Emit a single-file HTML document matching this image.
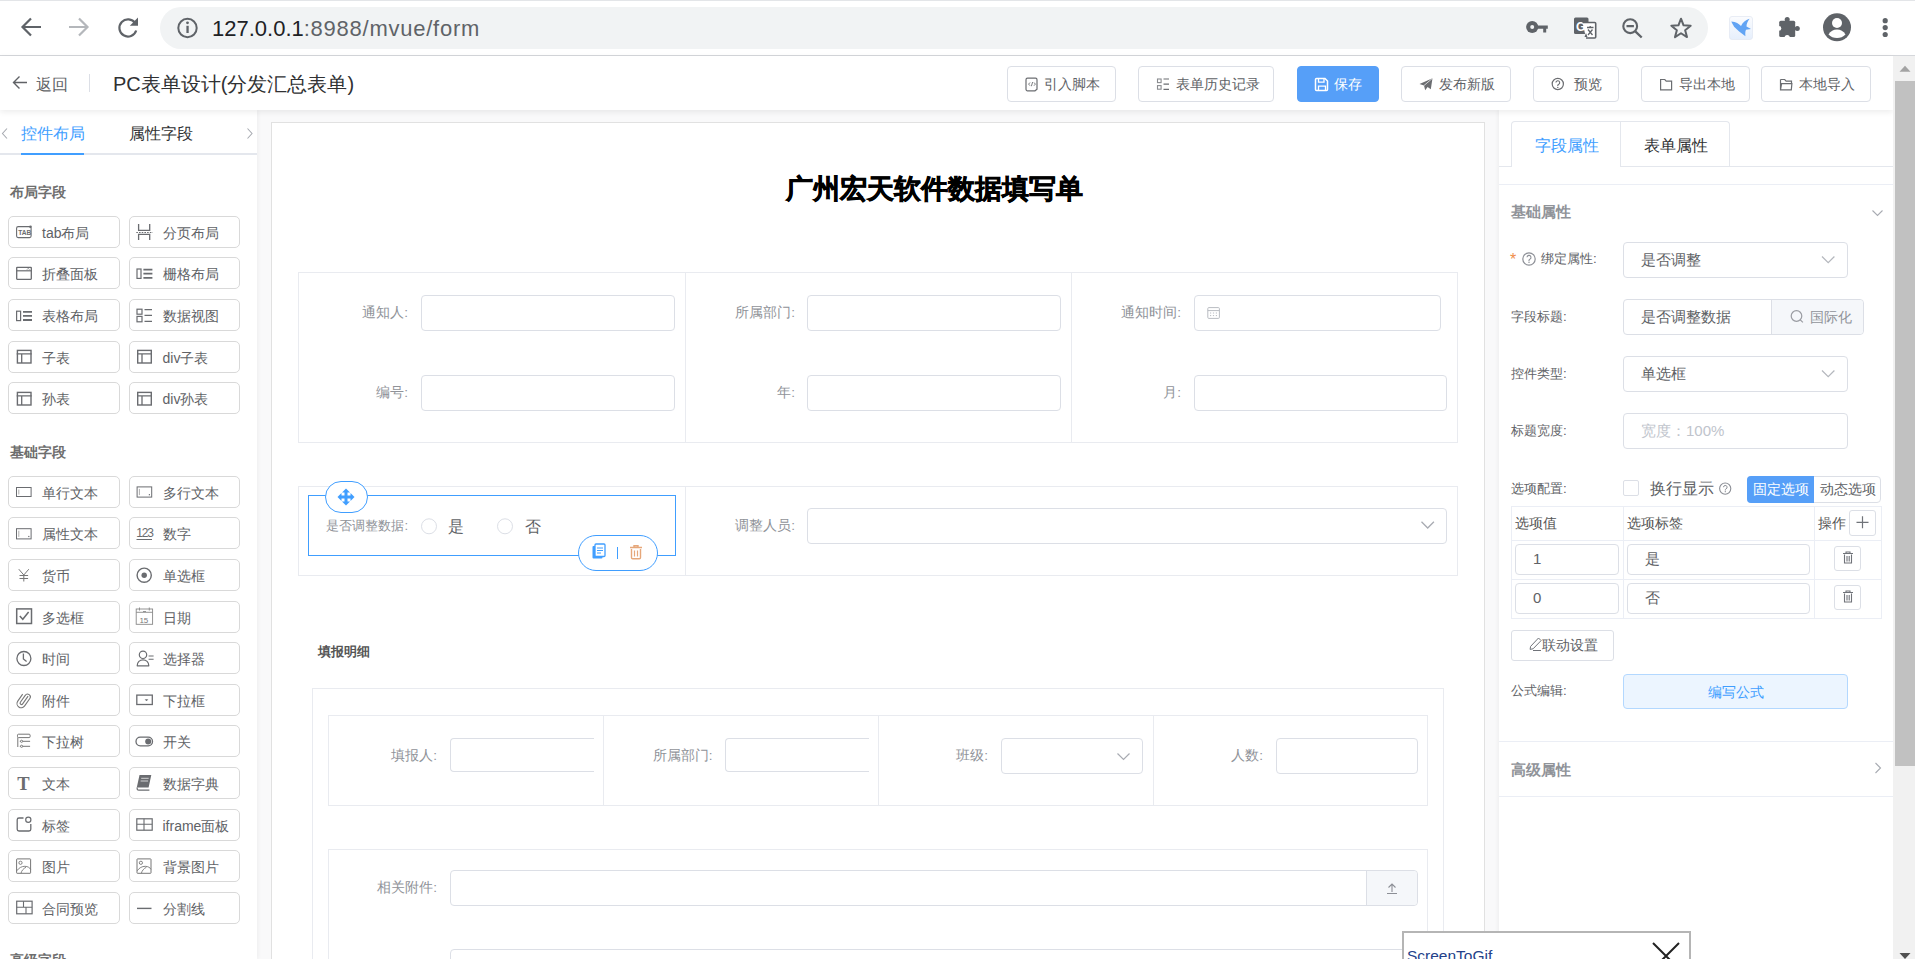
<!DOCTYPE html><html><head><meta charset="utf-8"><style>
*{box-sizing:border-box;margin:0;padding:0}
html,body{width:1915px;height:959px;overflow:hidden;background:#fff;font-family:"Liberation Sans",sans-serif;color:#606266}
.a{position:absolute}
.t{position:absolute;white-space:nowrap;line-height:1;z-index:8}
svg{position:absolute;overflow:visible}
</style></head><body>
<div class="a" style="left:0px;top:0px;width:1915px;height:56px;background:#fff;border-top:1px solid #e3e5e8;border-bottom:1px solid #d5d7db"></div>
<div class="a" style="left:160px;top:7px;width:1548px;height:42px;background:#f1f3f4;border-radius:21px"></div>
<svg style="left:0px;top:0px;z-index:10" width="1915" height="959" viewBox="0 0 1915 959">
<g fill="none" stroke="#5f6368" stroke-width="2.2" stroke-linecap="butt">
<path d="M41 27H23M31 18.5l-8.5 8.5 8.5 8.5"/>
</g>
<g fill="none" stroke="#b4b7bb" stroke-width="2.2">
<path d="M69 27h18M79 18.5l8.5 8.5-8.5 8.5"/>
</g>
<g fill="none" stroke="#5f6368" stroke-width="2.2">
<path d="M135.2 23.2A8.6 8.6 0 1 0 136.2 30.5"/>
</g>
<path d="M138 17.5v8.2h-8.2z" fill="#5f6368"/>
<circle cx="187.5" cy="28" r="9.2" fill="none" stroke="#5f6368" stroke-width="2"/>
<rect x="186.4" y="25.8" width="2.3" height="7.2" fill="#5f6368"/>
<circle cx="187.5" cy="22.8" r="1.4" fill="#5f6368"/>
</svg>
<div class="t" style="left:212px;top:18px;font-size:22px;color:#202124;letter-spacing:0px">127.0.0.1<span style="color:#5f6368;letter-spacing:0.75px">:8988/mvue/form</span></div>
<svg style="left:0px;top:0px;z-index:10" width="1915" height="959" viewBox="0 0 1915 959">
<circle cx="1532.2" cy="27" r="6.1" fill="#5f6368"/><circle cx="1532.2" cy="27" r="2" fill="#f1f3f4"/>
<path d="M1537 25.4h10.8v3.4h-1.6v3.7h-3v-3.7h-6.2z" fill="#5f6368"/>
<rect x="1574" y="17.5" width="14.5" height="16.5" rx="1.5" fill="#5f6368"/>
<text x="1576" y="31" font-size="12" font-weight="bold" fill="#fff" font-family="Liberation Sans">G</text>
<path d="M1582.5 22.5h12.2a1 1 0 0 1 1 1V37a1 1 0 0 1-1 1h-8.7" fill="#fff" stroke="#5f6368" stroke-width="1.6"/>
<path d="M1587 27.5h6.5M1590.2 26v1.5M1588 29.5l4.5 5.5M1592.5 29.5l-4.5 5.5" stroke="#5f6368" stroke-width="1.3" fill="none"/>
<path d="M1586 33l1.5 4h-3z" fill="#5f6368"/>
<circle cx="1630.2" cy="26.2" r="6.9" fill="none" stroke="#5f6368" stroke-width="2.1"/>
<path d="M1626.5 26.2h7.4M1635.3 31.3l6.4 6.2" stroke="#5f6368" stroke-width="2.3" fill="none"/>
<path d="M1681 18.7l2.55 6.6 7.1.4-5.5 4.5 1.85 6.9-6-3.85-6 3.85 1.85-6.9-5.5-4.5 7.1-.4z" fill="none" stroke="#5f6368" stroke-width="2" stroke-linejoin="round"/>
<defs><linearGradient id="bg1" x1="0" y1="0" x2="0" y2="1"><stop offset="0" stop-color="#fbfcfe"/><stop offset="1" stop-color="#e6effc"/></linearGradient></defs>
<rect x="1729.5" y="16.5" width="23" height="23" rx="2.5" fill="url(#bg1)" stroke="#e3e8f2" stroke-width="0.8"/>
<path d="M1731.3 21.6C1736 22 1739 24 1741 26C1743 22 1746 20 1749.6 18.8C1747.5 21.5 1746.5 24 1746.5 26.5L1751 29L1746 29.8C1745 32 1745.3 34 1745.4 36.2C1741 33 1737 30 1734.1 26.8C1733 25 1732 23 1731.3 21.6Z" fill="#62a4f4"/>
<rect x="1779.2" y="20.7" width="16" height="16.4" rx="1.6" fill="#5f6368"/>
<circle cx="1787.2" cy="19.6" r="2.5" fill="#5f6368"/>
<circle cx="1797.3" cy="28.4" r="2.5" fill="#5f6368"/>
<circle cx="1778.9" cy="28.4" r="2.4" fill="#fff"/>
<circle cx="1787.2" cy="37.6" r="2.6" fill="#fff"/>
<circle cx="1837" cy="27.3" r="14" fill="#5f6368"/>
<circle cx="1837" cy="23" r="5" fill="#fff"/>
<path d="M1828.5 34.5c2-3.5 5-5 8.5-5s6.5 1.5 8.5 5c-2.3 2.3-5.2 3.6-8.5 3.6s-6.2-1.3-8.5-3.6z" fill="#fff"/>
<circle cx="1885.2" cy="20.7" r="2.6" fill="#5f6368"/>
<circle cx="1885.2" cy="27.6" r="2.6" fill="#5f6368"/>
<circle cx="1885.2" cy="34.5" r="2.6" fill="#5f6368"/>
</svg>
<div class="a" style="left:0px;top:110px;width:1893px;height:849px;background:#f9f9fa"></div>
<div class="a" style="left:0px;top:56px;width:1893px;height:54px;background:#fff;box-shadow:0 2px 6px rgba(0,0,0,.08);z-index:2"></div>
<svg style="left:0px;top:0px;z-index:10" width="1915" height="959" viewBox="0 0 1915 959"><path d="M27 82.5H13.5M19.5 76.5l-6 6 6 6" fill="none" stroke="#606266" stroke-width="1.4"/>
<rect x="89" y="74" width="1" height="18" fill="#dcdfe6"/></svg>
<div class="t" style="left:36px;top:77px;font-size:16px;color:#606266;font-weight:normal;">返回</div>
<div class="t" style="left:113px;top:74px;font-size:20px;color:#303133;font-weight:normal;">PC表单设计(分发汇总表单)</div>
<div class="a" style="left:1007px;top:66px;width:109px;height:36px;background:#fff;border:1px solid #dcdfe6;border-radius:4px;z-index:3"></div>
<div class="t" style="left:1044px;top:77px;font-size:14px;color:#606266;font-weight:normal;z-index:4">引入脚本</div>
<div class="a" style="left:1138px;top:66px;width:136px;height:36px;background:#fff;border:1px solid #dcdfe6;border-radius:4px;z-index:3"></div>
<div class="t" style="left:1175.5px;top:77px;font-size:14px;color:#606266;font-weight:normal;z-index:4">表单历史记录</div>
<div class="a" style="left:1297px;top:66px;width:82px;height:36px;background:#569ff8;border:1px solid #569ff8;border-radius:4px;z-index:3"></div>
<div class="t" style="left:1333.5px;top:77px;font-size:14px;color:#fff;font-weight:normal;z-index:4">保存</div>
<div class="a" style="left:1401px;top:66px;width:110px;height:36px;background:#fff;border:1px solid #dcdfe6;border-radius:4px;z-index:3"></div>
<div class="t" style="left:1439px;top:77px;font-size:14px;color:#606266;font-weight:normal;z-index:4">发布新版</div>
<div class="a" style="left:1533px;top:66px;width:86px;height:36px;background:#fff;border:1px solid #dcdfe6;border-radius:4px;z-index:3"></div>
<div class="t" style="left:1574px;top:77px;font-size:14px;color:#606266;font-weight:normal;z-index:4">预览</div>
<div class="a" style="left:1641px;top:66px;width:109px;height:36px;background:#fff;border:1px solid #dcdfe6;border-radius:4px;z-index:3"></div>
<div class="t" style="left:1678.5px;top:77px;font-size:14px;color:#606266;font-weight:normal;z-index:4">导出本地</div>
<div class="a" style="left:1761px;top:66px;width:110px;height:36px;background:#fff;border:1px solid #dcdfe6;border-radius:4px;z-index:3"></div>
<div class="t" style="left:1798.5px;top:77px;font-size:14px;color:#606266;font-weight:normal;z-index:4">本地导入</div>
<svg style="left:0px;top:0px;z-index:10" width="1915" height="959" viewBox="0 0 1915 959"><g style="z-index:4">
<path d="M1027.5 78.2h8a1.5 1.5 0 0 1 1.5 1.5v9.5l-2 1.6h-7.5a1.5 1.5 0 0 1-1.5-1.5V79.7a1.5 1.5 0 0 1 1.5-1.5z" fill="none" stroke="#6b6d71" stroke-width="1.2"/>
<path d="M1030 82.5l-1.4 1.6 1.4 1.6M1034 82.5l1.4 1.6-1.4 1.6M1032.6 82l-1.2 4.2" fill="none" stroke="#6b6d71" stroke-width="0.9"/>
<rect x="1157.5" y="79" width="3.6" height="3.6" fill="none" stroke="#8a8c90" stroke-width="1.1"/>
<rect x="1157.5" y="85.6" width="3.6" height="3.6" fill="none" stroke="#8a8c90" stroke-width="1.1"/>
<path d="M1163.5 79h5.5M1163.5 84.2h5.5M1163.5 89.3h5.5" stroke="#6b6d71" stroke-width="1.2"/>
<path d="M1316.5 78.5h8.5l2.5 2.5v8.5a1 1 0 0 1-1 1h-10a1 1 0 0 1-1-1v-10a1 1 0 0 1 1-1z" fill="none" stroke="#fff" stroke-width="1.5"/>
<path d="M1318.5 78.7v3.5h5.5v-3.5M1318.5 90.4v-4.2h7v4.2" fill="none" stroke="#fff" stroke-width="1.3"/>
<path d="M1432.5 78.3l-13 5.6 4.5 1.6 1.2 4.7 2.4-3.2 3.2 2.2z" fill="#6b6d71"/>
<path d="M1424 85.5l8.5-7.2" stroke="#fff" stroke-width="0.7"/>
<circle cx="1557.8" cy="84" r="5.6" fill="none" stroke="#6b6d71" stroke-width="1.2"/>
<path d="M1555.9 82.6a1.9 1.9 0 1 1 2.6 1.8c-.5.2-.7.6-.7 1.1v.6" fill="none" stroke="#6b6d71" stroke-width="1.1"/>
<circle cx="1557.8" cy="87.4" r="0.7" fill="#6b6d71"/>
<path d="M1660.6 79.5h4.2l1.4 1.6h5.4v8.7h-11z" fill="none" stroke="#6b6d71" stroke-width="1.2"/>
<path d="M1780.5 79.5h4.2l1.4 1.6h5.4v2.5M1780.5 79.5v10.3h10.8l0.6-6.2h-10.3l-1.1 6.2" fill="none" stroke="#6b6d71" stroke-width="1.2"/>
</g></svg>
<div class="a" style="left:0px;top:110px;width:257px;height:849px;background:#fff;box-shadow:1px 0 4px rgba(0,0,0,.05);z-index:1"></div>
<svg style="left:0px;top:0px;z-index:3" width="1915" height="959" viewBox="0 0 1915 959"><path d="M7 128.5l-4.5 5 4.5 5" fill="none" stroke="#a8abb2" stroke-width="1.1"/>
<path d="M247.5 128.5l4.5 5-4.5 5" fill="none" stroke="#a8abb2" stroke-width="1.1"/></svg>
<div class="a" style="left:0px;top:153px;width:257px;height:2px;background:#e4e7ed;z-index:2"></div>
<div class="a" style="left:21px;top:153px;width:63px;height:2px;background:#409eff;z-index:3"></div>
<div class="t" style="left:21px;top:126px;font-size:16px;color:#409eff;font-weight:normal;">控件布局</div>
<div class="t" style="left:128.5px;top:126px;font-size:16px;color:#303133;font-weight:normal;">属性字段</div>
<div class="t" style="left:9.5px;top:185.5px;font-size:13.5px;color:#6e6e6e;font-weight:bold;">布局字段</div>
<div class="t" style="left:9.5px;top:445.5px;font-size:13.5px;color:#6e6e6e;font-weight:bold;">基础字段</div>
<div class="t" style="left:9.5px;top:954px;font-size:13.5px;color:#6e6e6e;font-weight:bold;">高级字段</div>
<div class="a" style="left:8px;top:216px;width:112px;height:32px;background:#fff;border:1px solid #d9d9d9;border-radius:5px;z-index:2"></div>
<div class="t" style="left:42px;top:226px;font-size:14px;color:#606266;font-weight:normal;">tab布局</div>
<div class="a" style="left:129px;top:216px;width:111px;height:32px;background:#fff;border:1px solid #d9d9d9;border-radius:5px;z-index:2"></div>
<div class="t" style="left:162.5px;top:226px;font-size:14px;color:#606266;font-weight:normal;">分页布局</div>
<div class="a" style="left:8px;top:257px;width:112px;height:32px;background:#fff;border:1px solid #d9d9d9;border-radius:5px;z-index:2"></div>
<div class="t" style="left:42px;top:267px;font-size:14px;color:#606266;font-weight:normal;">折叠面板</div>
<div class="a" style="left:129px;top:257px;width:111px;height:32px;background:#fff;border:1px solid #d9d9d9;border-radius:5px;z-index:2"></div>
<div class="t" style="left:162.5px;top:267px;font-size:14px;color:#606266;font-weight:normal;">栅格布局</div>
<div class="a" style="left:8px;top:299px;width:112px;height:32px;background:#fff;border:1px solid #d9d9d9;border-radius:5px;z-index:2"></div>
<div class="t" style="left:42px;top:309px;font-size:14px;color:#606266;font-weight:normal;">表格布局</div>
<div class="a" style="left:129px;top:299px;width:111px;height:32px;background:#fff;border:1px solid #d9d9d9;border-radius:5px;z-index:2"></div>
<div class="t" style="left:162.5px;top:309px;font-size:14px;color:#606266;font-weight:normal;">数据视图</div>
<div class="a" style="left:8px;top:341px;width:112px;height:32px;background:#fff;border:1px solid #d9d9d9;border-radius:5px;z-index:2"></div>
<div class="t" style="left:42px;top:351px;font-size:14px;color:#606266;font-weight:normal;">子表</div>
<div class="a" style="left:129px;top:341px;width:111px;height:32px;background:#fff;border:1px solid #d9d9d9;border-radius:5px;z-index:2"></div>
<div class="t" style="left:162.5px;top:351px;font-size:14px;color:#606266;font-weight:normal;">div子表</div>
<div class="a" style="left:8px;top:382px;width:112px;height:32px;background:#fff;border:1px solid #d9d9d9;border-radius:5px;z-index:2"></div>
<div class="t" style="left:42px;top:392px;font-size:14px;color:#606266;font-weight:normal;">孙表</div>
<div class="a" style="left:129px;top:382px;width:111px;height:32px;background:#fff;border:1px solid #d9d9d9;border-radius:5px;z-index:2"></div>
<div class="t" style="left:162.5px;top:392px;font-size:14px;color:#606266;font-weight:normal;">div孙表</div>
<div class="a" style="left:8px;top:476px;width:112px;height:32px;background:#fff;border:1px solid #d9d9d9;border-radius:5px;z-index:2"></div>
<div class="t" style="left:42px;top:486px;font-size:14px;color:#606266;font-weight:normal;">单行文本</div>
<div class="a" style="left:129px;top:476px;width:111px;height:32px;background:#fff;border:1px solid #d9d9d9;border-radius:5px;z-index:2"></div>
<div class="t" style="left:162.5px;top:486px;font-size:14px;color:#606266;font-weight:normal;">多行文本</div>
<div class="a" style="left:8px;top:517px;width:112px;height:32px;background:#fff;border:1px solid #d9d9d9;border-radius:5px;z-index:2"></div>
<div class="t" style="left:42px;top:527px;font-size:14px;color:#606266;font-weight:normal;">属性文本</div>
<div class="a" style="left:129px;top:517px;width:111px;height:32px;background:#fff;border:1px solid #d9d9d9;border-radius:5px;z-index:2"></div>
<div class="t" style="left:162.5px;top:527px;font-size:14px;color:#606266;font-weight:normal;">数字</div>
<div class="a" style="left:8px;top:559px;width:112px;height:32px;background:#fff;border:1px solid #d9d9d9;border-radius:5px;z-index:2"></div>
<div class="t" style="left:42px;top:569px;font-size:14px;color:#606266;font-weight:normal;">货币</div>
<div class="a" style="left:129px;top:559px;width:111px;height:32px;background:#fff;border:1px solid #d9d9d9;border-radius:5px;z-index:2"></div>
<div class="t" style="left:162.5px;top:569px;font-size:14px;color:#606266;font-weight:normal;">单选框</div>
<div class="a" style="left:8px;top:601px;width:112px;height:32px;background:#fff;border:1px solid #d9d9d9;border-radius:5px;z-index:2"></div>
<div class="t" style="left:42px;top:611px;font-size:14px;color:#606266;font-weight:normal;">多选框</div>
<div class="a" style="left:129px;top:601px;width:111px;height:32px;background:#fff;border:1px solid #d9d9d9;border-radius:5px;z-index:2"></div>
<div class="t" style="left:162.5px;top:611px;font-size:14px;color:#606266;font-weight:normal;">日期</div>
<div class="a" style="left:8px;top:642px;width:112px;height:32px;background:#fff;border:1px solid #d9d9d9;border-radius:5px;z-index:2"></div>
<div class="t" style="left:42px;top:652px;font-size:14px;color:#606266;font-weight:normal;">时间</div>
<div class="a" style="left:129px;top:642px;width:111px;height:32px;background:#fff;border:1px solid #d9d9d9;border-radius:5px;z-index:2"></div>
<div class="t" style="left:162.5px;top:652px;font-size:14px;color:#606266;font-weight:normal;">选择器</div>
<div class="a" style="left:8px;top:684px;width:112px;height:32px;background:#fff;border:1px solid #d9d9d9;border-radius:5px;z-index:2"></div>
<div class="t" style="left:42px;top:694px;font-size:14px;color:#606266;font-weight:normal;">附件</div>
<div class="a" style="left:129px;top:684px;width:111px;height:32px;background:#fff;border:1px solid #d9d9d9;border-radius:5px;z-index:2"></div>
<div class="t" style="left:162.5px;top:694px;font-size:14px;color:#606266;font-weight:normal;">下拉框</div>
<div class="a" style="left:8px;top:725px;width:112px;height:32px;background:#fff;border:1px solid #d9d9d9;border-radius:5px;z-index:2"></div>
<div class="t" style="left:42px;top:735px;font-size:14px;color:#606266;font-weight:normal;">下拉树</div>
<div class="a" style="left:129px;top:725px;width:111px;height:32px;background:#fff;border:1px solid #d9d9d9;border-radius:5px;z-index:2"></div>
<div class="t" style="left:162.5px;top:735px;font-size:14px;color:#606266;font-weight:normal;">开关</div>
<div class="a" style="left:8px;top:767px;width:112px;height:32px;background:#fff;border:1px solid #d9d9d9;border-radius:5px;z-index:2"></div>
<div class="t" style="left:42px;top:777px;font-size:14px;color:#606266;font-weight:normal;">文本</div>
<div class="a" style="left:129px;top:767px;width:111px;height:32px;background:#fff;border:1px solid #d9d9d9;border-radius:5px;z-index:2"></div>
<div class="t" style="left:162.5px;top:777px;font-size:14px;color:#606266;font-weight:normal;">数据字典</div>
<div class="a" style="left:8px;top:809px;width:112px;height:32px;background:#fff;border:1px solid #d9d9d9;border-radius:5px;z-index:2"></div>
<div class="t" style="left:42px;top:819px;font-size:14px;color:#606266;font-weight:normal;">标签</div>
<div class="a" style="left:129px;top:809px;width:111px;height:32px;background:#fff;border:1px solid #d9d9d9;border-radius:5px;z-index:2"></div>
<div class="t" style="left:162.5px;top:819px;font-size:14px;color:#606266;font-weight:normal;">iframe面板</div>
<div class="a" style="left:8px;top:850px;width:112px;height:32px;background:#fff;border:1px solid #d9d9d9;border-radius:5px;z-index:2"></div>
<div class="t" style="left:42px;top:860px;font-size:14px;color:#606266;font-weight:normal;">图片</div>
<div class="a" style="left:129px;top:850px;width:111px;height:32px;background:#fff;border:1px solid #d9d9d9;border-radius:5px;z-index:2"></div>
<div class="t" style="left:162.5px;top:860px;font-size:14px;color:#606266;font-weight:normal;">背景图片</div>
<div class="a" style="left:8px;top:892px;width:112px;height:32px;background:#fff;border:1px solid #d9d9d9;border-radius:5px;z-index:2"></div>
<div class="t" style="left:42px;top:902px;font-size:14px;color:#606266;font-weight:normal;">合同预览</div>
<div class="a" style="left:129px;top:892px;width:111px;height:32px;background:#fff;border:1px solid #d9d9d9;border-radius:5px;z-index:2"></div>
<div class="t" style="left:162.5px;top:902px;font-size:14px;color:#606266;font-weight:normal;">分割线</div>
<svg style="left:0px;top:0px;z-index:9" width="1915" height="959" viewBox="0 0 1915 959"><rect x="16.6" y="226.6" width="14.5" height="11" rx="1.6" fill="none" stroke="#6a6c70" stroke-width="1.1"/><text x="18.2" y="235.2" font-size="6.6" font-family="Liberation Sans" font-weight="bold" fill="#6a6c70">TAB</text><circle cx="30.5" cy="226.8" r="1.3" fill="#6a6c70"/><path d="M138.6 224v6.3h11.1V224M138.6 240v-5.6h11.1V240" fill="none" stroke="#6a6c70" stroke-width="1.3"/><path d="M136.3 232.5h16.5" stroke="#6a6c70" stroke-width="1" stroke-dasharray="1.6 1.1"/><rect x="16.7" y="267.3" width="14.6" height="12" rx="0.5" fill="none" stroke="#6a6c70" stroke-width="1.3"/><path d="M16.5 270.8h15" stroke="#6a6c70" stroke-width="1.2"/><path d="M27 269.6l1.2-1.2 1.2 1.2" fill="none" stroke="#6a6c70" stroke-width="0.8"/><rect x="137.0" y="269.0" width="4" height="9.4" fill="none" stroke="#6a6c70" stroke-width="1.2"/><path d="M143.4 269.59999999999997h9M143.4 273.7h9M143.4 277.79999999999995h9" stroke="#6a6c70" stroke-width="1.8"/><rect x="16.6" y="311.20000000000005" width="4" height="9.4" fill="none" stroke="#6a6c70" stroke-width="1.2"/><path d="M23 311.8h9M23 315.90000000000003h9M23 320.0h9" stroke="#6a6c70" stroke-width="1.8"/><rect x="137" y="309.2" width="5" height="5" fill="none" stroke="#6a6c70" stroke-width="1.2"/><rect x="137" y="316.4" width="5" height="5.4" fill="none" stroke="#6a6c70" stroke-width="1.2"/><path d="M144.5 309.6h7.5M144.5 315.4h7.5M144.5 321.4h7.5" stroke="#6a6c70" stroke-width="1.2"/><rect x="17.4" y="350.4" width="13.6" height="12.6" fill="none" stroke="#6a6c70" stroke-width="1.4"/><path d="M16.7 353.9h15M21.7 353.9v9" stroke="#6a6c70" stroke-width="1.3"/><rect x="137.7" y="350.4" width="13.6" height="12.6" fill="none" stroke="#6a6c70" stroke-width="1.4"/><path d="M137 353.9h15M142 353.9v9" stroke="#6a6c70" stroke-width="1.3"/><rect x="17.4" y="392.4" width="13.6" height="12.6" fill="none" stroke="#6a6c70" stroke-width="1.4"/><path d="M16.7 395.9h15M21.7 395.9v9" stroke="#6a6c70" stroke-width="1.3"/><rect x="137.7" y="392.4" width="13.6" height="12.6" fill="none" stroke="#6a6c70" stroke-width="1.4"/><path d="M137 395.9h15M142 395.9v9" stroke="#6a6c70" stroke-width="1.3"/><rect x="16.5" y="487.5" width="14.6" height="9" fill="none" stroke="#6a6c70" stroke-width="1"/><path d="M18.8 489.5v5" stroke="#999" stroke-width="0.8"/><rect x="137.1" y="486.9" width="14.6" height="10.2" fill="none" stroke="#6a6c70" stroke-width="1"/><path d="M139.4 488.9v6.199999999999999" stroke="#999" stroke-width="0.8"/><rect x="148.79999999999998" y="494.09999999999997" width="1.2" height="1.2" fill="#6a6c70"/><rect x="16.5" y="528.7" width="14.6" height="10.2" fill="none" stroke="#6a6c70" stroke-width="1"/><path d="M18.8 530.7v6.199999999999999" stroke="#999" stroke-width="0.8"/><rect x="28.2" y="535.9000000000001" width="1.2" height="1.2" fill="#6a6c70"/><text x="136.2" y="537" font-size="12" font-family="Liberation Sans" fill="#6a6c70" letter-spacing="-1.2">123</text><path d="M136.5 539.5h15.5" stroke="#6a6c70" stroke-width="1"/><path d="M18.8 569.2l5 5.8 5-5.8M23.8 575v6.5M19.5 575.5h8.6M19.5 578.5h8.6" fill="none" stroke="#777" stroke-width="1"/><circle cx="144.2" cy="575.2" r="7.1" fill="none" stroke="#6a6c70" stroke-width="1.4"/><circle cx="144.2" cy="575.2" r="2.7" fill="#6a6c70"/><rect x="16.7" y="608.9" width="14.8" height="14.6" fill="none" stroke="#6a6c70" stroke-width="1.5"/><path d="M19.8 615.9l3 3.4 5.8-7.3" fill="none" stroke="#6a6c70" stroke-width="1.5"/><rect x="136.2" y="609" width="16.4" height="15.3" fill="none" stroke="#888" stroke-width="0.9"/><path d="M136.2 612.3h16.4M139.5 607.5v3M149.3 607.5v3M143 611.5h3" stroke="#888" stroke-width="0.9"/><text x="139.4" y="622.5" font-size="8" font-family="Liberation Sans" fill="#777">15</text><circle cx="23.9" cy="658.5" r="7" fill="none" stroke="#6a6c70" stroke-width="1.3"/><path d="M23.4 653.5v5.4l3.2 2.5" fill="none" stroke="#6a6c70" stroke-width="1.3"/><circle cx="143" cy="654.8" r="3.7" fill="none" stroke="#6a6c70" stroke-width="1.2"/><path d="M137.2 665.8c0-3.6 2.6-6 5.8-6s5.8 2.4 5.8 6z" fill="none" stroke="#6a6c70" stroke-width="1.2" stroke-linejoin="round"/><path d="M148.6 656h5M148.6 659.2h5" stroke="#6a6c70" stroke-width="1.1"/><g transform="translate(23.8 699.8) rotate(35)"><path d="M1.4 -5.5v9.5a1.4 1.4 0 0 1-2.8 0v-8.5a2.8 2.8 0 0 1 5.6 0v9a4.2 4.2 0 0 1-8.4 0v-8.5" fill="none" stroke="#777" stroke-width="1.1"/></g><rect x="136.8" y="695.1" width="15.5" height="9.4" fill="none" stroke="#6a6c70" stroke-width="1.3"/><path d="M145.3 699.6h2.4l-1.2 1.3z" fill="#6a6c70" stroke="#6a6c70" stroke-width="0.6"/><rect x="17.5" y="734.2" width="12.6" height="3.4" rx="1" fill="none" stroke="#777" stroke-width="1"/><path d="M17.8 737.5v9.5M19.8 741.3h10.3M19.8 746.3h10.3" fill="none" stroke="#777" stroke-width="1"/><circle cx="21.6" cy="741.3" r="1.1" fill="#fff" stroke="#777" stroke-width="0.9"/><circle cx="21.6" cy="746.3" r="1.1" fill="#fff" stroke="#777" stroke-width="0.9"/><rect x="136" y="737.2" width="16.5" height="8.6" rx="4.3" fill="none" stroke="#6a6c70" stroke-width="1.3"/><circle cx="148.2" cy="741.5" r="3" fill="#6a6c70"/><text x="17.2" y="790" font-size="18.5" font-family="Liberation Serif" font-weight="bold" fill="#6a6c70">T</text><path d="M139.5 775h11.8l-2.7 12.5h-11.8z" fill="#6a6c70"/><path d="M137.3 787.5c-.6 2 .3 2.6 1.6 2.6h10.5" fill="none" stroke="#6a6c70" stroke-width="1.2"/><path d="M141.2 778.3h7.5M140.6 781h7.5" stroke="#fff" stroke-width="0.7"/><path d="M23.5 818H19a1.8 1.8 0 0 0-1.8 1.8v9.4a1.8 1.8 0 0 0 1.8 1.8h10a1.8 1.8 0 0 0 1.8-1.8V824" fill="none" stroke="#6a6c70" stroke-width="1.3"/><circle cx="28.3" cy="819.8" r="2.6" fill="none" stroke="#6a6c70" stroke-width="1.2"/><rect x="136.8" y="818.8" width="15.4" height="11.4" fill="none" stroke="#6a6c70" stroke-width="1.2"/><path d="M136.8 824.3h15.4M144 818.8v11.4" stroke="#6a6c70" stroke-width="1.1"/><rect x="16.6" y="858.9" width="14" height="14.4" rx="0.5" fill="none" stroke="#777" stroke-width="1"/><circle cx="20.5" cy="862.8" r="1.6" fill="none" stroke="#777" stroke-width="0.9"/><path d="M16.8 870.8c2-3 5-4.5 8-4.5 3 0 5 1.5 5.8 3M21 873.3c.5-2.5 2.5-5 5-6" fill="none" stroke="#777" stroke-width="0.9"/><rect x="137.0" y="858.9" width="14" height="14.4" rx="0.5" fill="none" stroke="#777" stroke-width="1"/><circle cx="140.9" cy="862.8" r="1.6" fill="none" stroke="#777" stroke-width="0.9"/><path d="M137.20000000000002 870.8c2-3 5-4.5 8-4.5 3 0 5 1.5 5.8 3M141.4 873.3c.5-2.5 2.5-5 5-6" fill="none" stroke="#777" stroke-width="0.9"/><rect x="16.7" y="901.2" width="15.4" height="12.6" fill="none" stroke="#6a6c70" stroke-width="1.2"/><path d="M16.7 907.3h15.4M23.5 901.2v6.1M26 907.3v6.5" stroke="#6a6c70" stroke-width="1.1"/><path d="M137 908.4h14.5" stroke="#6a6c70" stroke-width="1.4"/></svg>
<div class="a" style="left:271px;top:122px;width:1214px;height:837px;background:#fff;border:1px solid #e1e1e1;border-bottom:none;z-index:1"></div>
<div class="t" style="left:786px;top:176px;font-size:27px;color:#000;font-weight:bold;-webkit-text-stroke:0.6px #000">广州宏天软件数据填写单</div>
<div class="a" style="left:298px;top:272px;width:1160px;height:171px;border:1px solid #e9ebf0;z-index:2"></div>
<div class="a" style="left:685px;top:272px;width:1px;height:171px;background:#e9ebf0;z-index:2"></div>
<div class="a" style="left:1071px;top:272px;width:1px;height:171px;background:#e9ebf0;z-index:2"></div>
<div class="t" style="right:1507px;top:305.5px;font-size:13.5px;color:#909399;font-weight:normal;">通知人:</div>
<div class="a" style="left:421px;top:295px;width:254px;height:36px;border:1px solid #dcdfe6;border-radius:4px;background:#fff;z-index:3;"></div>
<div class="t" style="right:1120px;top:305.5px;font-size:13.5px;color:#909399;font-weight:normal;">所属部门:</div>
<div class="a" style="left:807px;top:295px;width:254px;height:36px;border:1px solid #dcdfe6;border-radius:4px;background:#fff;z-index:3;"></div>
<div class="t" style="right:734px;top:305.5px;font-size:13.5px;color:#909399;font-weight:normal;">通知时间:</div>
<div class="a" style="left:1194px;top:295px;width:247px;height:36px;border:1px solid #dcdfe6;border-radius:4px;background:#fff;z-index:3;"></div>
<div class="t" style="right:1507px;top:385.5px;font-size:13.5px;color:#909399;font-weight:normal;">编号:</div>
<div class="a" style="left:421px;top:375px;width:254px;height:36px;border:1px solid #dcdfe6;border-radius:4px;background:#fff;z-index:3;"></div>
<div class="t" style="right:1120px;top:385.5px;font-size:13.5px;color:#909399;font-weight:normal;">年:</div>
<div class="a" style="left:807px;top:375px;width:254px;height:36px;border:1px solid #dcdfe6;border-radius:4px;background:#fff;z-index:3;"></div>
<div class="t" style="right:734px;top:385.5px;font-size:13.5px;color:#909399;font-weight:normal;">月:</div>
<div class="a" style="left:1194px;top:375px;width:253px;height:36px;border:1px solid #dcdfe6;border-radius:4px;background:#fff;z-index:3;"></div>
<svg style="left:0px;top:0px;z-index:9" width="1915" height="959" viewBox="0 0 1915 959"><rect x="1207.8" y="307.6" width="11.6" height="10.8" rx="1" fill="none" stroke="#b9bcc2" stroke-width="1"/><path d="M1207.8 310.6h11.6M1210 313h1.2M1212.9 313h1.2M1215.8 313h1.2M1210 315.6h1.2M1212.9 315.6h1.2M1215.8 315.6h1.2" stroke="#b9bcc2" stroke-width="1"/></svg>
<div class="a" style="left:298px;top:486px;width:1160px;height:90px;border:1px solid #e9ebf0;z-index:2"></div>
<div class="a" style="left:685px;top:486px;width:1px;height:90px;background:#e9ebf0;z-index:2"></div>
<div class="a" style="left:308px;top:495px;width:368px;height:61px;border:1px solid #409eff;z-index:4"></div>
<div class="t" style="right:1507px;top:519px;font-size:13px;color:#909399;font-weight:normal;">是否调整数据:</div>
<svg style="left:0px;top:0px;z-index:9" width="1915" height="959" viewBox="0 0 1915 959"><circle cx="429" cy="526.3" r="7.5" fill="#fff" stroke="#dcdfe6" stroke-width="1"/><circle cx="505" cy="526.3" r="7.5" fill="#fff" stroke="#dcdfe6" stroke-width="1"/></svg>
<div class="t" style="left:448px;top:519px;font-size:15.5px;color:#606266;font-weight:normal;">是</div>
<div class="t" style="left:524.5px;top:519px;font-size:15.5px;color:#606266;font-weight:normal;">否</div>
<div class="t" style="right:1120px;top:518.5px;font-size:13.5px;color:#909399;font-weight:normal;">调整人员:</div>
<div class="a" style="left:807px;top:508px;width:640px;height:36px;border:1px solid #dcdfe6;border-radius:4px;background:#fff;z-index:3;"></div>
<svg style="left:0px;top:0px;z-index:9" width="1915" height="959" viewBox="0 0 1915 959"><path d="M1421.5 521.8l6.2 6.2 6.2-6.2" fill="none" stroke="#a8abb2" stroke-width="1.3"/></svg>
<div class="a" style="left:325px;top:481px;width:43px;height:32px;border:1px solid #409eff;border-radius:16px;background:#fff;z-index:6"></div>
<svg style="left:0px;top:0px;z-index:11" width="1915" height="959" viewBox="0 0 1915 959"><path d="M346 488.5l4 4h-2.5v3h3v-2.5l4 4-4 4v-2.5h-3v3h2.5l-4 4-4-4h2.5v-3h-3v2.5l-4-4 4-4v2.5h3v-3h-2.5z" fill="#409eff"/></svg>
<div class="a" style="left:578px;top:535px;width:80px;height:36px;border:1px solid #409eff;border-radius:18px;background:#fff;z-index:6"></div>
<svg style="left:0px;top:0px;z-index:11" width="1915" height="959" viewBox="0 0 1915 959"><rect x="592.5" y="546" width="10" height="12.5" rx="1" fill="#409eff"/>
<rect x="595" y="544" width="10" height="12.5" rx="1" fill="#fff" stroke="#409eff" stroke-width="1.3"/>
<path d="M597 548h6M597 550.5h6M597 553h4" stroke="#409eff" stroke-width="1.1"/>
<rect x="617" y="547" width="1" height="12" fill="#409eff"/>
<path d="M630 547.5h12M634 547.5v-1.8h4v1.8" fill="none" stroke="#e6a77a" stroke-width="1.4"/>
<path d="M631.5 549v8.5a1.2 1.2 0 0 0 1.2 1.2h6.6a1.2 1.2 0 0 0 1.2-1.2V549" fill="none" stroke="#e6a77a" stroke-width="1.4"/>
<path d="M634.5 550.5v6M637.5 550.5v6" stroke="#e6a77a" stroke-width="1.2"/></svg>
<div class="t" style="left:318px;top:645px;font-size:13.2px;color:#555;font-weight:bold;">填报明细</div>
<div class="a" style="left:312px;top:688px;width:1132px;height:271px;border:1px solid #e9ebf0;border-bottom:none;z-index:2"></div>
<div class="a" style="left:328px;top:715px;width:1100px;height:91px;border:1px solid #e9ebf0;z-index:3"></div>
<div class="a" style="left:603px;top:715px;width:1px;height:91px;background:#e9ebf0;z-index:3"></div>
<div class="a" style="left:878px;top:715px;width:1px;height:91px;background:#e9ebf0;z-index:3"></div>
<div class="a" style="left:1153px;top:715px;width:1px;height:91px;background:#e9ebf0;z-index:3"></div>
<div class="t" style="right:1478px;top:748.5px;font-size:13.5px;color:#909399;font-weight:normal;">填报人:</div>
<div class="a" style="left:450px;top:738px;width:144px;height:34px;border:1px solid #dcdfe6;border-radius:4px;background:#fff;z-index:3;border-right:none;border-radius:4px 0 0 4px"></div>
<div class="t" style="right:1202.5px;top:748.5px;font-size:13.5px;color:#909399;font-weight:normal;">所属部门:</div>
<div class="a" style="left:725px;top:738px;width:144px;height:34px;border:1px solid #dcdfe6;border-radius:4px;background:#fff;z-index:3;border-right:none;border-radius:4px 0 0 4px"></div>
<div class="t" style="right:927px;top:748.5px;font-size:13.5px;color:#909399;font-weight:normal;">班级:</div>
<div class="a" style="left:1001px;top:738px;width:142px;height:36px;border:1px solid #dcdfe6;border-radius:4px;background:#fff;z-index:3;"></div>
<svg style="left:0px;top:0px;z-index:9" width="1915" height="959" viewBox="0 0 1915 959"><path d="M1117.5 753.5l6 6 6-6" fill="none" stroke="#a8abb2" stroke-width="1.2"/></svg>
<div class="t" style="right:652px;top:748.5px;font-size:13.5px;color:#909399;font-weight:normal;">人数:</div>
<div class="a" style="left:1276px;top:738px;width:142px;height:36px;border:1px solid #dcdfe6;border-radius:4px;background:#fff;z-index:3;"></div>
<div class="a" style="left:328px;top:849px;width:1100px;height:110px;border:1px solid #e9ebf0;border-bottom:none;z-index:3"></div>
<div class="t" style="right:1478px;top:881px;font-size:13.5px;color:#909399;font-weight:normal;">相关附件:</div>
<div class="a" style="left:450px;top:870px;width:968px;height:36px;border:1px solid #dcdfe6;border-radius:4px;background:#fff;z-index:3;"></div>
<div class="a" style="left:1366px;top:871px;width:51px;height:34px;background:#f5f7fa;border-left:1px solid #dcdfe6;border-radius:0 4px 4px 0;z-index:4"></div>
<svg style="left:0px;top:0px;z-index:9" width="1915" height="959" viewBox="0 0 1915 959"><path d="M1387 893.5h10M1392 892v-8M1388.5 887.5l3.5-3.5 3.5 3.5" fill="none" stroke="#8c8f96" stroke-width="1.1"/></svg>
<div class="a" style="left:450px;top:949px;width:968px;height:41px;border:1px solid #dcdfe6;border-radius:4px;background:#fff;z-index:3;"></div>
<div class="a" style="left:1499px;top:110px;width:394px;height:849px;background:#fff;box-shadow:-1px 0 4px rgba(0,0,0,.05);z-index:1"></div>
<div class="a" style="left:1499px;top:166px;width:394px;height:1px;background:#e4e7ed;z-index:2"></div>
<div class="a" style="left:1511px;top:121px;width:219px;height:46px;border:1px solid #e4e7ed;border-bottom:none;border-radius:4px 4px 0 0;background:#fff;z-index:3"></div>
<div class="a" style="left:1620px;top:121px;width:1px;height:46px;background:#e4e7ed;z-index:4"></div>
<div class="a" style="left:1621px;top:166px;width:109px;height:1px;background:#e4e7ed;z-index:4"></div>
<div class="t" style="left:1534.5px;top:138px;font-size:16px;color:#409eff;font-weight:normal;">字段属性</div>
<div class="t" style="left:1644px;top:138px;font-size:16px;color:#303133;font-weight:normal;">表单属性</div>
<div class="a" style="left:1499px;top:184px;width:394px;height:1px;background:#ebeef5;z-index:2"></div>
<div class="t" style="left:1511px;top:203.5px;font-size:15px;color:#909399;font-weight:bold;">基础属性</div>
<svg style="left:0px;top:0px;z-index:9" width="1915" height="959" viewBox="0 0 1915 959"><path d="M1872.5 210.5l5 5 5-5" fill="none" stroke="#a8abb2" stroke-width="1.1"/></svg>
<div class="t" style="left:1510px;top:252px;font-size:16px;color:#f08d49;font-weight:normal;">*</div>
<svg style="left:0px;top:0px;z-index:9" width="1915" height="959" viewBox="0 0 1915 959"><circle cx="1529" cy="259" r="6.2" fill="none" stroke="#8c8f96" stroke-width="1.2"/><path d="M1527 257.3a2 2 0 1 1 2.8 1.9c-.5.2-.8.6-.8 1.1v.7" fill="none" stroke="#8c8f96" stroke-width="1.1"/><circle cx="1529" cy="262.3" r="0.75" fill="#8c8f96"/></svg>
<div class="t" style="left:1541px;top:252px;font-size:13.4px;color:#606266;font-weight:normal;">绑定属性:</div>
<div class="a" style="left:1623px;top:242px;width:225px;height:36px;border:1px solid #dcdfe6;border-radius:4px;background:#fff;z-index:3;"></div>
<div class="t" style="left:1641px;top:251.5px;font-size:15px;color:#606266;font-weight:normal;">是否调整</div>
<svg style="left:0px;top:0px;z-index:9" width="1915" height="959" viewBox="0 0 1915 959"><path d="M1822 256.5l6.2 6.2 6.2-6.2" fill="none" stroke="#b4b7bd" stroke-width="1.2"/></svg>
<div class="t" style="left:1511px;top:309.5px;font-size:13.4px;color:#606266;font-weight:normal;">字段标题:</div>
<div class="a" style="left:1623px;top:299px;width:241px;height:36px;border:1px solid #dcdfe6;border-radius:4px;background:#fff;z-index:3;"></div>
<div class="a" style="left:1771px;top:300px;width:92px;height:34px;background:#f5f7fa;border-left:1px solid #dcdfe6;border-radius:0 4px 4px 0;z-index:4"></div>
<div class="t" style="left:1641px;top:308.5px;font-size:15px;color:#606266;font-weight:normal;">是否调整数据</div>
<svg style="left:0px;top:0px;z-index:9" width="1915" height="959" viewBox="0 0 1915 959"><circle cx="1796.5" cy="316" r="5.3" fill="none" stroke="#9a9ca2" stroke-width="1.2"/><path d="M1800.3 319.8l2.6 2.6" stroke="#9a9ca2" stroke-width="1.2"/></svg>
<div class="t" style="left:1809.5px;top:309.5px;font-size:14px;color:#909399;font-weight:normal;">国际化</div>
<div class="t" style="left:1511px;top:366.5px;font-size:13.4px;color:#606266;font-weight:normal;">控件类型:</div>
<div class="a" style="left:1623px;top:356px;width:225px;height:36px;border:1px solid #dcdfe6;border-radius:4px;background:#fff;z-index:3;"></div>
<div class="t" style="left:1641px;top:365.5px;font-size:15px;color:#606266;font-weight:normal;">单选框</div>
<svg style="left:0px;top:0px;z-index:9" width="1915" height="959" viewBox="0 0 1915 959"><path d="M1822 370.5l6.2 6.2 6.2-6.2" fill="none" stroke="#b4b7bd" stroke-width="1.2"/></svg>
<div class="t" style="left:1511px;top:423.5px;font-size:13.4px;color:#606266;font-weight:normal;">标题宽度:</div>
<div class="a" style="left:1623px;top:413px;width:225px;height:36px;border:1px solid #dcdfe6;border-radius:4px;background:#fff;z-index:3;"></div>
<div class="t" style="left:1641px;top:422.5px;font-size:15px;color:#c0c4cc;font-weight:normal;">宽度：100%</div>
<div class="t" style="left:1511px;top:481.5px;font-size:13.4px;color:#606266;font-weight:normal;">选项配置:</div>
<div class="a" style="left:1623px;top:480px;width:16px;height:16px;border:1px solid #dcdfe6;border-radius:2px;background:#fff;z-index:3"></div>
<div class="t" style="left:1650px;top:480.5px;font-size:16px;color:#606266;font-weight:normal;">换行显示</div>
<svg style="left:0px;top:0px;z-index:9" width="1915" height="959" viewBox="0 0 1915 959"><circle cx="1725.2" cy="488.6" r="5.6" fill="none" stroke="#8c8f96" stroke-width="1.1"/><path d="M1723.5 487.2a1.8 1.8 0 1 1 2.5 1.7c-.45.2-.7.55-.7 1v.6" fill="none" stroke="#8c8f96" stroke-width="1"/><circle cx="1725.3" cy="491.7" r="0.65" fill="#8c8f96"/></svg>
<div class="a" style="left:1747px;top:476px;width:134px;height:27px;border:1px solid #dcdfe6;border-radius:4px;background:#fff;z-index:3"></div>
<div class="a" style="left:1747px;top:476px;width:67px;height:27px;background:#569ff8;border-radius:4px 0 0 4px;z-index:4"></div>
<div class="t" style="left:1753px;top:482.5px;font-size:13.5px;color:#fff;font-weight:normal;">固定选项</div>
<div class="t" style="left:1820px;top:482.5px;font-size:13.5px;color:#606266;font-weight:normal;">动态选项</div>
<div class="a" style="left:1511px;top:506px;width:371px;height:113px;border:1px solid #ebeef5;z-index:2"></div>
<div class="a" style="left:1511px;top:540px;width:371px;height:1px;background:#ebeef5;z-index:2"></div>
<div class="a" style="left:1511px;top:579px;width:371px;height:1px;background:#ebeef5;z-index:2"></div>
<div class="a" style="left:1623px;top:506px;width:1px;height:113px;background:#ebeef5;z-index:2"></div>
<div class="a" style="left:1814px;top:506px;width:1px;height:113px;background:#ebeef5;z-index:2"></div>
<div class="t" style="left:1515px;top:515.5px;font-size:14px;color:#555;font-weight:normal;">选项值</div>
<div class="t" style="left:1627px;top:515.5px;font-size:14px;color:#555;font-weight:normal;">选项标签</div>
<div class="t" style="left:1818px;top:515.5px;font-size:14px;color:#555;font-weight:normal;">操作</div>
<div class="a" style="left:1849px;top:510px;width:27px;height:26px;border:1px solid #dcdfe6;border-radius:3px;background:#fff;z-index:3"></div>
<svg style="left:0px;top:0px;z-index:9" width="1915" height="959" viewBox="0 0 1915 959"><path d="M1862.5 516.3v12M1856.5 522.3h12" stroke="#707379" stroke-width="1.2"/></svg>
<div class="a" style="left:1515px;top:544px;width:104px;height:31px;border:1px solid #dcdfe6;border-radius:4px;background:#fff;z-index:3;"></div>
<div class="a" style="left:1627px;top:544px;width:183px;height:31px;border:1px solid #dcdfe6;border-radius:4px;background:#fff;z-index:3;"></div>
<div class="t" style="left:1533px;top:550.5px;font-size:15px;color:#606266;font-weight:normal;">1</div>
<div class="t" style="left:1645px;top:550.5px;font-size:15px;color:#606266;font-weight:normal;">是</div>
<div class="a" style="left:1834px;top:546px;width:27px;height:25px;border:1px solid #dcdfe6;border-radius:3px;background:#fff;z-index:3"></div>
<svg style="left:0px;top:0px;z-index:9" width="1915" height="959" viewBox="0 0 1915 959"><path d="M1843 553.5h10M1846 553.5v-1.5h4v1.5M1844.5 554.5v8.5h7v-8.5M1847 556.0v5.5M1849.2 556.0v5.5" fill="none" stroke="#707379" stroke-width="1.1"/></svg>
<div class="a" style="left:1515px;top:583px;width:104px;height:31px;border:1px solid #dcdfe6;border-radius:4px;background:#fff;z-index:3;"></div>
<div class="a" style="left:1627px;top:583px;width:183px;height:31px;border:1px solid #dcdfe6;border-radius:4px;background:#fff;z-index:3;"></div>
<div class="t" style="left:1533px;top:589.5px;font-size:15px;color:#606266;font-weight:normal;">0</div>
<div class="t" style="left:1645px;top:589.5px;font-size:15px;color:#606266;font-weight:normal;">否</div>
<div class="a" style="left:1834px;top:585px;width:27px;height:25px;border:1px solid #dcdfe6;border-radius:3px;background:#fff;z-index:3"></div>
<svg style="left:0px;top:0px;z-index:9" width="1915" height="959" viewBox="0 0 1915 959"><path d="M1843 592.5h10M1846 592.5v-1.5h4v1.5M1844.5 593.5v8.5h7v-8.5M1847 595.0v5.5M1849.2 595.0v5.5" fill="none" stroke="#707379" stroke-width="1.1"/></svg>
<div class="a" style="left:1511px;top:630px;width:103px;height:31px;border:1px solid #dcdfe6;border-radius:3px;background:#fff;z-index:3"></div>
<svg style="left:0px;top:0px;z-index:9" width="1915" height="959" viewBox="0 0 1915 959"><path d="M1538.5 638l2.6 2.6-8 8.2-3 .6.5-3z" fill="none" stroke="#707379" stroke-width="1" stroke-linejoin="round"/><path d="M1533 650.5h8" stroke="#707379" stroke-width="1"/></svg>
<div class="t" style="left:1541.5px;top:637.5px;font-size:14px;color:#606266;font-weight:normal;">联动设置</div>
<div class="t" style="left:1511px;top:684px;font-size:13.4px;color:#606266;font-weight:normal;">公式编辑:</div>
<div class="a" style="left:1623px;top:674px;width:225px;height:35px;border:1px solid #b3d8ff;border-radius:4px;background:#ecf5ff;z-index:3"></div>
<div class="t" style="left:1708px;top:684.5px;font-size:14px;color:#409eff;font-weight:normal;">编写公式</div>
<div class="a" style="left:1499px;top:741px;width:394px;height:1px;background:#ebeef5;z-index:2"></div>
<div class="t" style="left:1511px;top:761.5px;font-size:15px;color:#909399;font-weight:bold;">高级属性</div>
<svg style="left:0px;top:0px;z-index:9" width="1915" height="959" viewBox="0 0 1915 959"><path d="M1875.5 763l5 5-5 5" fill="none" stroke="#a8abb2" stroke-width="1.1"/></svg>
<div class="a" style="left:1499px;top:796px;width:394px;height:1px;background:#ebeef5;z-index:2"></div>
<div class="a" style="left:1893px;top:56px;width:22px;height:903px;background:#f1f1f1;z-index:20"></div>
<div class="a" style="left:1895px;top:81px;width:20px;height:685px;background:#c1c1c1;z-index:21"></div>
<svg style="left:0px;top:0px;z-index:22" width="1915" height="959" viewBox="0 0 1915 959"><path d="M1899.5 71.7h11l-5.5-6z" fill="#a3a3a3"/><path d="M1899.5 953h11l-5.5 6z" fill="#505050"/></svg>
<div class="a" style="left:1402px;top:931px;width:289px;height:40px;background:#fff;border:2px solid #b5b5b5;z-index:30"></div>
<div class="t" style="left:1407px;top:947.5px;font-size:15.5px;color:#23418a;font-weight:normal;z-index:31">ScreenToGif</div>
<svg style="left:0px;top:0px;z-index:32" width="1915" height="959" viewBox="0 0 1915 959"><path d="M1653 943l26 26M1679 943l-26 26" stroke="#222" stroke-width="2"/></svg>
</body></html>
